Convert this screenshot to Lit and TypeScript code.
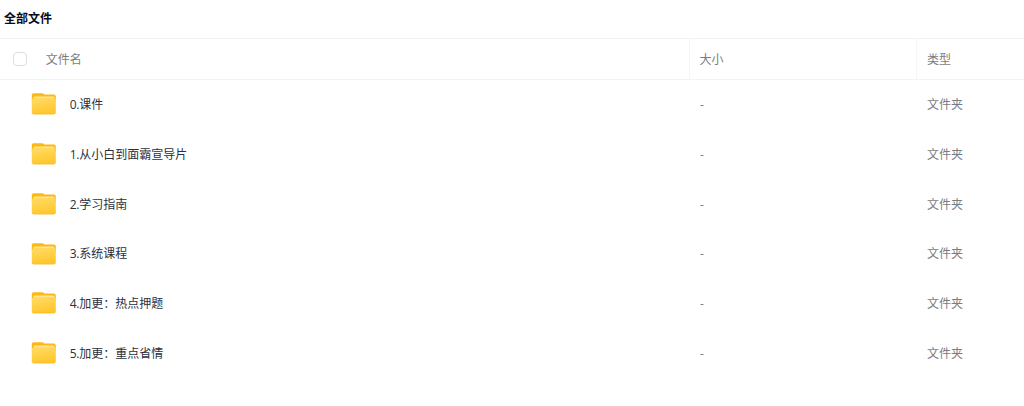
import { LitElement, html, css, svg } from "lit";
import { customElement, property } from "lit/decorators.js";

@customElement("folder-icon")
class FolderIcon extends LitElement {
  static styles = css`
    :host { display: block; width: 26px; height: 24px; }
    svg { display: block; }
  `;
  render() {
    return html`<svg width="26" height="24" viewBox="0 0 26 24">
      ${svg`
      <defs>
        <linearGradient id="front" x1="0" y1="0" x2="0.25" y2="1">
          <stop offset="0" stop-color="#ffdc66"></stop>
          <stop offset="1" stop-color="#ffc72e"></stop>
        </linearGradient>
        <linearGradient id="sheet" x1="0" y1="0" x2="0" y2="1">
          <stop offset="0" stop-color="#ffe7a0"></stop>
          <stop offset="1" stop-color="#ffda64"></stop>
        </linearGradient>
      </defs>
      <path d="M.8 3.1Q.8 1.3 2.6 1.3H11Q12 1.3 12.7 1.8L13.4 2.4H22.8Q24.8 2.4 24.8 4.4V10H.8Z" fill="#fdb813"></path>
      <path d="M2.3 8V6.4Q2.3 4.6 4 4.6H22Q23.6 4.6 23.6 6.4V8Z" fill="url(#sheet)"></path>
      <path d="M.8 7.8Q2.2 5.9 4 5.9H22.8Q24.8 5.9 24.8 7.8V20.3Q24.8 22.3 22.8 22.3H2.8Q.8 22.3 .8 20.3Z" fill="url(#front)"></path>
      <path d="M1.1 20.8Q1.5 22 2.8 22H22.8Q24 22 24.5 20.8" fill="none" stroke="#fcb91d" stroke-width=".6"></path>`}
    </svg>`;
  }
}

@customElement("file-row")
class FileRow extends LitElement {
  @property() index = "";
  @property() name = "";
  static styles = css`
    :host {
      display: grid;
      grid-template-columns: 690px 227px 1fr;
      align-items: center;
      height: 49.75px;
      color: #7b7c80;
    }
    .name { display: flex; align-items: center; padding-left: 31px; color: #2b3040; }
    folder-icon { margin-bottom: 1.2px; }
    .label { padding: 0.6px 0 0 12.7px; white-space: nowrap; }
    .index { letter-spacing: -0.2px; }
    .cell { padding: 0.6px 0 0 9.9px; }
  `;
  render() {
    return html`
      <div class="name">
        <folder-icon></folder-icon>
        <span class="label"><span class="index">${this.index}.</span>${this.name}</span>
      </div>
      <div class="cell">-</div>
      <div class="cell">文件夹</div>
    `;
  }
}

@customElement("app-root")
class AppRoot extends LitElement {
  static styles = css`
    :host {
      display: block;
      height: 406px;
      overflow: hidden;
      background: #fff;
      font: 12px/18px "Open Sans", "Noto Sans CJK SC", sans-serif;
    }
    .title {
      box-sizing: border-box;
      height: 38px;
      padding: 10px 0 0 4px;
      font-weight: 700;
      color: #050b20;
    }
    .head {
      box-sizing: border-box;
      display: grid;
      grid-template-columns: 690px 227px 1fr;
      height: 42px;
      border-top: 1px solid #f3f3f5;
      border-bottom: 1px solid #f3f3f5;
      color: #7b7c80;
    }
    .col {
      box-sizing: border-box;
      display: flex;
      align-items: center;
      padding-left: 9.5px;
      border-right: 1px solid #f5f5f7;
    }
    .col span { padding-top: 1px; }
    .col:first-child { padding-left: 13px; gap: 18.7px; }
    .col:last-child { border-right: 0; padding-left: 9.9px; }
    .check {
      box-sizing: border-box;
      width: 14px;
      height: 14px;
      border: 1px solid #dedee2;
      border-radius: 4px;
    }
  `;

  private files = ["课件", "从小白到面霸宣导片", "学习指南", "系统课程", "加更：热点押题", "加更：重点省情"];

  render() {
    return html`
      <div class="title">全部文件</div>
      <div class="head">
        <div class="col"><div class="check"></div><span>文件名</span></div>
        <div class="col"><span>大小</span></div>
        <div class="col"><span>类型</span></div>
      </div>
      ${this.files.map((f, i) => html`<file-row .index=${String(i)} .name=${f}></file-row>`)}
    `;
  }
}
